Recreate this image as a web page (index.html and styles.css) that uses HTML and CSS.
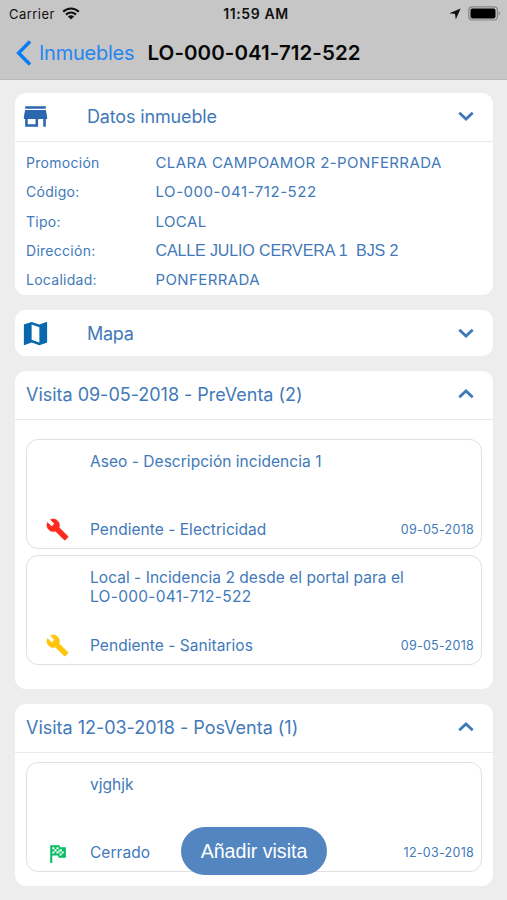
FILE: index.html
```html
<!DOCTYPE html>
<html lang="es">
<head>
<meta charset="utf-8">
<title>LO-000-041-712-522</title>
<link rel="stylesheet" href="styles.css">
</head>
<body>
<header class="top">
  <div class="status">
    <div class="status-left"><span class="carrier">Carrier</span>
      <svg class="wifi" viewBox="0 0 18 13"><path d="M1.2 4.7C5.6.4 12.4.4 16.8 4.7M4 7.6c2.9-2.7 7.1-2.7 10 0" fill="none" stroke="#111" stroke-width="2.2"/><path d="M5.9 9.4c1.8-1.6 4.4-1.6 6.2 0L9 12.6z" fill="#111"/></svg>
    </div>
    <span class="clock">11:59 AM</span>
    <div class="status-right">
      <svg class="arrow" viewBox="0 0 12 12"><path d="M11.6.4 6.8 11.6 6 6 .4 5.2z" fill="#111"/></svg>
      <svg class="battery" viewBox="0 0 33 15"><rect x=".8" y=".8" width="28.6" height="13.2" rx="3.4" fill="none" stroke="#858585" stroke-width="1.2"/><rect x="2.5" y="2.6" width="25" height="9.8" rx="1.8"/><path d="M30.7 5.2c1.8.7 1.8 3.7 0 4.4z" fill="#858585"/></svg>
    </div>
  </div>
  <nav class="nav">
    <svg class="back" viewBox="0 0 16 26"><path d="M14 1.5 2.6 13 14 24.5" fill="none" stroke="#087cf8" stroke-width="3.4"/></svg>
    <span class="back-label">Inmuebles</span>
    <h1 class="page-title">LO-000-041-712-522</h1>
  </nav>
</header>
<main class="content">
  <section class="card">
    <div class="head">
      <svg class="lead" viewBox="0 0 24 24"><path fill="#2a67ae" d="M20 4H4v2h16V4zm1 10v-2l-1-5H4l-1 5v2h1v6h10v-6h4v6h2v-6h1zm-9 4H6v-4h6v4z"/></svg>
      <h2 class="title datos">Datos inmueble</h2>
      <svg class="chev" viewBox="0 0 16 10"><path d="m1.3 1.7 6.7 6.3 6.7-6.3"/></svg>
    </div>
    <dl class="facts">
      <dt>Promoción</dt><dd>CLARA CAMPOAMOR 2-PONFERRADA</dd>
      <dt>Código:</dt><dd class="code">LO-000-041-712-522</dd>
      <dt>Tipo:</dt><dd>LOCAL</dd>
      <dt>Dirección:</dt><dd class="address">CALLE JULIO CERVERA 1&nbsp; BJS 2</dd>
      <dt>Localidad:</dt><dd>PONFERRADA</dd>
    </dl>
  </section>
  <section class="card">
    <div class="head compact">
      <svg class="lead" viewBox="0 0 24 24"><path fill="#0868ad" d="M20.5 3l-.16.03L15 5.1 9 3 3.36 4.9c-.21.07-.36.25-.36.48V20.5c0 .28.22.5.5.5l.16-.03L9 18.9l6 2.1 5.64-1.9c.21-.07.36-.25.36-.48V3.5c0-.28-.22-.5-.5-.5zM15 19l-6-2.11V5l6 2.11V19z"/></svg>
      <h2 class="title mapa">Mapa</h2>
      <svg class="chev" viewBox="0 0 16 10"><path d="m1.3 1.7 6.7 6.3 6.7-6.3"/></svg>
    </div>
  </section>
  <section class="card">
    <div class="head">
      <h2 class="title wide">Visita 09-05-2018 - PreVenta (2)</h2>
      <svg class="chev" viewBox="0 0 16 10"><path d="m1.3 8.3 6.7-6.3 6.7 6.3"/></svg>
    </div>
    <div class="items roomy">
      <article class="item">
        <p class="desc">Aseo - Descripción incidencia 1</p>
        <svg class="mark" viewBox="0 0 24 24"><path fill="#fb2a1c" stroke="#fb2a1c" stroke-width=".7" d="M22.7 19l-9.1-9.1c.9-2.3.4-5-1.5-6.9-2-2-5-2.4-7.4-1.3L9 6 6 9 1.6 4.7C.4 7.1.9 10.1 2.9 12.1c1.9 1.9 4.6 2.4 6.9 1.5l9.1 9.1c.4.4 1 .4 1.4 0l2.3-2.3c.5-.4.5-1.1.1-1.4z"/></svg>
        <span class="state">Pendiente - Electricidad</span><time class="date">09-05-2018</time>
      </article>
      <article class="item">
        <p class="desc">Local - Incidencia 2 desde el portal para el<br><span class="ref">LO-000-041-712-522</span></p>
        <svg class="mark" viewBox="0 0 24 24"><path fill="#fdc60a" stroke="#fdc60a" stroke-width=".7" d="M22.7 19l-9.1-9.1c.9-2.3.4-5-1.5-6.9-2-2-5-2.4-7.4-1.3L9 6 6 9 1.6 4.7C.4 7.1.9 10.1 2.9 12.1c1.9 1.9 4.6 2.4 6.9 1.5l9.1 9.1c.4.4 1 .4 1.4 0l2.3-2.3c.5-.4.5-1.1.1-1.4z"/></svg>
        <span class="state">Pendiente - Sanitarios</span><time class="date">09-05-2018</time>
      </article>
    </div>
  </section>
  <section class="card">
    <div class="head">
      <h2 class="title wide">Visita 12-03-2018 - PosVenta (1)</h2>
      <svg class="chev" viewBox="0 0 16 10"><path d="m1.3 8.3 6.7-6.3 6.7 6.3"/></svg>
    </div>
    <div class="items">
      <article class="item">
        <p class="desc">vjghjk</p>
        <svg class="mark flag" viewBox="0 0 24 24"><path fill="#08bd62" d="M14.4,6H20V16H13L12.6,14H7V21H5V4H14L14.4,6M14,14H16V12H18V10H16V8H14V10L13,8V6H11V8H9V6H7V8H9V10H7V12H9V10H11V12H13V10L14,12V14M11,10V8H13V10H11M14,10H16V12H14V10Z"/></svg>
        <span class="state">Cerrado</span><time class="date">12-03-2018</time>
      </article>
    </div>
  </section>
</main>
<button class="add">Añadir visita</button>
</body>
</html>
```
FILE: styles.css
```css
* { box-sizing: border-box; }
body { margin: 0; height: 900px; overflow: hidden; background: #ededed; color: #4279b9; font-family: Inter, "Liberation Sans", sans-serif; }
h1, h2, p, dl, dd { margin: 0; font-weight: 400; }
svg { display: block; flex: none; }
.top { height: 80px; background: #c6c6c6; border-bottom: 1px solid #b9b9b9; color: #111; }
.status { height: 27px; display: grid; grid-template-columns: 1fr auto 1fr; align-items: center; padding: 0 6px 0 9px; font-size: 13px; }
.status-left, .status-right { display: flex; align-items: center; }
.status-left { gap: 7px; }
.status-right { justify-content: flex-end; gap: 7px; }
.carrier { letter-spacing: .45px; }
.wifi { width: 18px; height: 13px; }
.clock { padding-left: 2px; font-size: 14px; font-weight: 600; letter-spacing: .6px; }
.arrow { width: 12px; height: 12px; }
.battery { width: 33px; height: 15px; }
.nav { height: 51px; display: flex; align-items: center; padding-left: 16px; }
.back { width: 16px; height: 26px; margin-right: 7px; }
.back-label { width: 108.5px; font-size: 20px; letter-spacing: -.25px; color: #2585f2; white-space: nowrap; }
.page-title { font-size: 20.5px; font-weight: 600; letter-spacing: .07px; color: #080808; white-space: nowrap; }
.content { display: flex; flex-direction: column; gap: 15px; padding: 13px 14px 0 15px; }
.card { background: #fff; border-radius: 11px; }
.head { height: 49px; display: grid; grid-template-columns: 72px 1fr 16px; align-items: center; padding: 0 19px 2px 0; border-bottom: 1.5px solid #e9e9e9; }
.head.compact { height: 46px; padding-bottom: 0; border-bottom: 0; }
.lead { width: 31px; height: 31px; margin-left: 4.5px; }
.title { font-size: 18px; letter-spacing: -.02px; white-space: nowrap; }
.title.datos { letter-spacing: -.15px; }
.title.mapa { letter-spacing: -.25px; }
.title.wide { grid-column: 1 / 3; padding-left: 11px; }
.chev { width: 16px; height: 10px; fill: none; stroke: #3d78b9; stroke-width: 2.8; }
.facts { display: grid; grid-template-columns: 129.5px 1fr; grid-auto-rows: 29.3px; align-items: center; padding: 6px 0 0 11px; height: 153px; font-size: 15px; letter-spacing: .4px; white-space: nowrap; }
.facts dt { font-size: 14px; letter-spacing: .28px; }
.facts .code { letter-spacing: .55px; }
.facts .address { font-family: "Liberation Sans", sans-serif; font-size: 16px; letter-spacing: -.12px; }
.items { display: flex; flex-direction: column; gap: 6px; padding: 9px 11px 14px; }
.items.roomy { padding: 19px 11px 24px; }
.item { height: 110px; display: grid; grid-template-columns: 63px 1fr auto; grid-template-rows: 72px 36px; align-items: center; padding-right: 7px; border: 1.5px solid #e0e0e0; border-radius: 12px; font-size: 15.5px; letter-spacing: .04px; white-space: nowrap; }
.desc { grid-column: 2 / 4; align-self: start; padding-top: 12px; line-height: 19px; }
.desc .ref { letter-spacing: .28px; }
.mark { width: 23px; height: 23px; margin: 0 0 1px 18.5px; }
.flag { width: 25px; height: 25px; margin: 0 0 0 18px; }
.state, .date { padding-bottom: 1px; }
.date { font-size: 12.5px; letter-spacing: .27px; }
.add { position: absolute; left: 181px; top: 827px; width: 146px; height: 48px; border: 0; border-radius: 24px; padding: 0; background: #5386c0; color: #fff; font: 19.6px "Liberation Sans", sans-serif; }
```
